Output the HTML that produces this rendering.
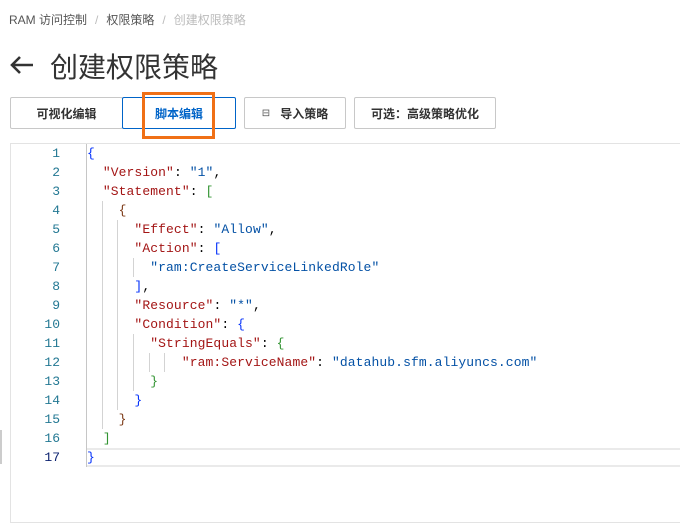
<!DOCTYPE html>
<html><head><meta charset="utf-8"><style>
*{margin:0;padding:0;box-sizing:border-box}
body{width:680px;height:494px;background:#fff;position:relative;overflow:hidden;font-family:"Liberation Sans","Noto Sans CJK SC",sans-serif}
.a{position:absolute}
.bc{top:11px;left:9px;font-size:12px;color:#555;white-space:nowrap}
.bc span{color:#bbb;margin:0 8px}
.btn{position:absolute;top:97px;height:32px;border:1px solid #c8c8c8;background:#fff;font-size:12px;font-weight:bold;color:#333;display:flex;align-items:center;justify-content:center;border-radius:2px}
.ed{left:10px;top:143px;width:680px;height:380px;border:1px solid #e3e3e3;border-right:none}
.ln{position:absolute;left:0;width:60px;text-align:right;font-family:"Liberation Mono",monospace;font-size:13px;color:#237893;height:19px;line-height:19px}
.cl{position:absolute;left:87px;font-family:"Liberation Mono",monospace;font-size:13px;letter-spacing:0.1px;height:19px;line-height:19px;white-space:pre;color:#000}
.k{color:#a31515}.s{color:#0451a5}.b1{color:#0431fa}.b2{color:#319331}.b3{color:#7b3814}
.g{position:absolute;width:1px;background:#d3d3d3}
</style></head><body>
<div class="a bc">RAM 访问控制<span>/</span>权限策略<span>/</span><b style="font-weight:normal;color:#bbb">创建权限策略</b></div>
<div class="a" style="top:46px;left:9px;font-size:28px;color:#333;white-space:nowrap"><svg width="26" height="20" viewBox="0 0 26 20" style="margin-right:15px;vertical-align:2px"><path d="M24 10H3M11 2L3 10l8 8" stroke="#333" stroke-width="2.6" fill="none"/></svg>创建权限策略</div>
<div class="btn" style="left:10px;width:113px">可视化编辑</div>
<div class="btn" style="left:122px;width:114px;border-color:#0064c8;color:#0064c8">脚本编辑</div>
<div class="btn" style="left:244px;width:102px"><span style="font-size:10px;color:#555;margin-right:10px;font-weight:normal">⊟</span>导入策略</div>
<div class="btn" style="left:354px;width:142px">可选：高级策略优化</div>
<div class="a" style="left:142px;top:92px;width:73px;height:47px;border:3px solid #f07016"></div>
<div class="a ed"></div>
<div class="a" style="left:87px;top:448px;width:600px;height:19px;border-top:2px solid #eaeaea;border-bottom:2px solid #eaeaea"></div>
<div class="a" style="left:86px;top:144px;width:1px;height:323px;background:#c6c6c6"></div>
<div class="a" style="left:0;top:430px;width:2px;height:34px;background:#ccc"></div>
<div id="code"></div>
<script>
var L=[
'<span class="b1">{</span>',
'  <span class="k">"Version"</span>: <span class="s">"1"</span>,',
'  <span class="k">"Statement"</span>: <span class="b2">[</span>',
'    <span class="b3">{</span>',
'      <span class="k">"Effect"</span>: <span class="s">"Allow"</span>,',
'      <span class="k">"Action"</span>: <span class="b1">[</span>',
'        <span class="s">"ram:CreateServiceLinkedRole"</span>',
'      <span class="b1">]</span>,',
'      <span class="k">"Resource"</span>: <span class="s">"*"</span>,',
'      <span class="k">"Condition"</span>: <span class="b1">{</span>',
'        <span class="k">"StringEquals"</span>: <span class="b2">{</span>',
'            <span class="k">"ram:ServiceName"</span>: <span class="s">"datahub.sfm.aliyuncs.com"</span>',
'        <span class="b2">}</span>',
'      <span class="b1">}</span>',
'    <span class="b3">}</span>',
'  <span class="b2">]</span>',
'<span class="b1">}</span>'];
var h='';for(var i=0;i<L.length;i++){var t=144+i*19;h+='<div class="ln" style="top:'+t+'px;'+(i==16?'color:#0b216f':'')+'">'+(i+1)+'</div><div class="cl" style="top:'+t+'px">'+L[i]+'</div>';}
var G=[[102,201,429],[117,220,410],[133,258,258+19],[133,334,391],[149,353,372],[164,353,372]];
G.forEach(function(g){h+='<div class="g" style="left:'+g[0]+'px;top:'+g[1]+'px;height:'+(g[2]-g[1])+'px"></div>'});
document.getElementById('code').innerHTML=h;
</script>
</body></html>
